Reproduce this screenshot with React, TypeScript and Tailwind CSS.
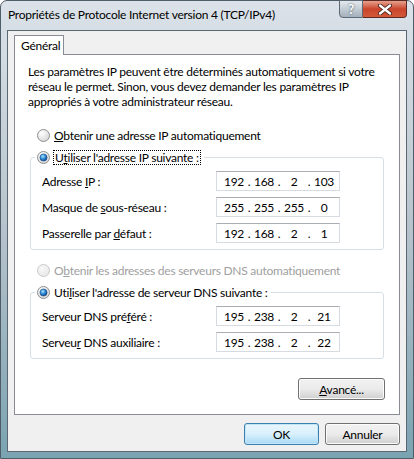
import type { ReactNode } from 'react';

const font = "font-['Lato',sans-serif]";

function Radio({ checked, disabled }: { checked?: boolean; disabled?: boolean }) {
  const id = checked ? 'on' : disabled ? 'dis' : 'off';
  return (
    <svg width="13" height="13" viewBox="0 0 13 13" className="shrink-0">
      <defs>
        <radialGradient id={`bg-${id}`} cx="0.35" cy="0.3" r="0.8">
          <stop offset="0" stopColor={disabled ? '#f7f7f7' : '#ffffff'} />
          <stop offset="1" stopColor={disabled ? '#e8e8e8' : '#d4d4d4'} />
        </radialGradient>
        <radialGradient id={`dot-${id}`} cx="0.4" cy="0.35" r="0.7">
          <stop offset="0" stopColor="#a8e4ff" />
          <stop offset="0.5" stopColor="#2f8ad6" />
          <stop offset="1" stopColor="#0d3f7d" />
        </radialGradient>
      </defs>
      <circle
        cx="6.5"
        cy="6.5"
        r="6"
        fill={`url(#bg-${id})`}
        stroke={disabled ? '#c8c8c8' : '#8e8f8f'}
      />
      {checked && <circle cx="6.5" cy="6.5" r="3.6" fill={`url(#dot-${id})`} stroke="#1b4f86" strokeWidth="0.6" />}
    </svg>
  );
}

function IpBox({ parts }: { parts: string[] }) {
  return (
    <div className="flex h-[20px] w-[124px] items-center border border-[#d6dbe2] border-t-[#abadb3] bg-white pl-[6px]">
      {parts.map((p, i) => (
        <div key={i} className="flex items-center">
          {i > 0 && <span className="w-[8px] text-center">.</span>}
          <span className="w-[22px] text-center">{p}</span>
        </div>
      ))}
    </div>
  );
}

function Row({ label, parts }: { label: ReactNode; parts: string[] }) {
  return (
    <div className="flex h-[20px] items-center">
      <div className="w-[174px]">{label}</div>
      <IpBox parts={parts} />
    </div>
  );
}

function Button({ children, primary, className = '' }: { children: ReactNode; primary?: boolean; className?: string }) {
  return (
    <div
      className={`flex h-[22px] items-center justify-center rounded-[3px] border ${
        primary
          ? 'border-[#3c7fb1] bg-gradient-to-b from-[#eaf6fd] via-[#d9f0fc] to-[#a7d9f5] shadow-[inset_0_0_0_1px_#c4e5f6]'
          : 'border-[#707070] bg-gradient-to-b from-[#f2f2f2] via-[#ebebeb] to-[#cfcfcf] shadow-[inset_0_0_0_1px_#fcfcfc]'
      } ${className}`}
    >
      {children}
    </div>
  );
}

export default function App() {
  return (
    <div className={`h-[459px] w-[414px] text-[12px] leading-[15px] tracking-[-0.25px] text-black ${font}`}>
      <div className="flex h-full flex-col rounded-t-[7px] border border-[#4f5d69] bg-gradient-to-b from-[#dbe2e9] via-[#b7c3cc] to-[#7aa3b1] px-[6px] pb-[6px]">
        {/* Title bar */}
        <div className="flex h-[29px] items-start">
          <div className="pl-[1px] pt-[6px] text-[12px] leading-[16px] text-black">
            Propriétés de Protocole Internet version 4 (TCP/IPv4)
          </div>
          <div className="-mt-px ml-auto flex">
            <div className="flex h-[18px] w-[24px] items-center justify-center rounded-bl-[4px] border border-[#5e6b77] bg-gradient-to-b from-[#e4e9ee] via-[#c3ccd4] to-[#a3b0bb] text-[13px] font-bold text-white [text-shadow:0_0_2px_#2d3a46]">
              ?
            </div>
            <div className="flex h-[18px] w-[44px] items-center justify-center rounded-br-[4px] border border-l-0 border-[#5a2a22] bg-gradient-to-b from-[#e6a08e] via-[#c9452b] to-[#d35a3a]">
              <svg width="14" height="11" viewBox="0 0 14 11">
                <path d="M2 1.5 L12 9.5 M12 1.5 L2 9.5" stroke="#3a1a14" strokeWidth="4" strokeLinecap="round" />
                <path d="M2 1.5 L12 9.5 M12 1.5 L2 9.5" stroke="#ffffff" strokeWidth="2.4" strokeLinecap="round" />
              </svg>
            </div>
          </div>
        </div>

        {/* Client area */}
        <div className="flex flex-1 flex-col border border-[#5b6772] bg-[#f0f0f0]">
          {/* Tab */}
          <div className="relative z-10 -mb-px ml-[6px] mt-[4px] flex h-[20px] w-[50px] items-center border border-b-0 border-[#898c95] bg-white pl-[6px]">
            Général
          </div>

          {/* Tab panel */}
          <div className="ml-[6px] flex w-[386px] flex-col border border-[#898c95] bg-white pb-[14px]">
            <p className="whitespace-nowrap pl-[13px] pt-[9px]">
              Les paramètres IP peuvent être déterminés automatiquement si votre
              <br />
              réseau le permet. Sinon, vous devez demander les paramètres IP
              <br />
              appropriés à votre administrateur réseau.
            </p>

            <div className="ml-[22px] mt-[18px] flex h-[16px] items-center gap-[4px]">
              <Radio />
              <span>
                <u>O</u>btenir une adresse IP automatiquement
              </span>
            </div>

            <fieldset className="mx-[15px] mt-[6px] rounded-[3px] border border-[#d5dfe5] pb-[6px] pl-[11px]">
              <legend className="-ml-[7px] flex h-[16px] items-center gap-[3px] pl-[2px] pr-[3px]">
                <Radio checked />
                <span className="border border-dotted border-black px-[1px] leading-[13px]">
                  U<u>t</u>iliser l'adresse IP suivante :
                </span>
              </legend>
              <div className="mt-[6px] flex flex-col gap-[6px]">
                <Row label={<>Adresse <u>I</u>P :</>} parts={['192', '168', '2', '103']} />
                <Row label={<>Masque de <u>s</u>ous-réseau :</>} parts={['255', '255', '255', '0']} />
                <Row label={<>Passerelle par <u>d</u>éfaut :</>} parts={['192', '168', '2', '1']} />
              </div>
            </fieldset>

            <div className="ml-[22px] mt-[12px] flex h-[16px] items-center gap-[4px] text-[#a0a0a0]">
              <Radio disabled />
              <span>
                O<u>b</u>tenir les adresses des serveurs DNS automatiquement
              </span>
            </div>

            <fieldset className="mx-[15px] mt-[6px] rounded-[3px] border border-[#d5dfe5] pb-[6px] pl-[11px]">
              <legend className="-ml-[7px] flex h-[16px] items-center gap-[4px] pl-[2px] pr-[3px]">
                <Radio checked />
                <span>
                  Uti<u>l</u>iser l'adresse de serveur DNS suivante :
                </span>
              </legend>
              <div className="mt-[6px] flex flex-col gap-[6px]">
                <Row label={<>Serveur DNS pré<u>f</u>éré :</>} parts={['195', '238', '2', '21']} />
                <Row label={<>Serveu<u>r</u> DNS auxiliaire :</>} parts={['195', '238', '2', '22']} />
              </div>
            </fieldset>

            <div className="mr-[14px] mt-[19px] flex justify-end">
              <Button className="h-[21px] w-[87px]">
                <span>
                  <u>A</u>vancé...
                </span>
              </Button>
            </div>
          </div>

          {/* Footer */}
          <div className="mr-[6px] mt-[8px] flex justify-end gap-[6px]">
            <Button primary className="w-[75px]">
              OK
            </Button>
            <Button className="w-[75px]">Annuler</Button>
          </div>
        </div>
      </div>
    </div>
  );
}
